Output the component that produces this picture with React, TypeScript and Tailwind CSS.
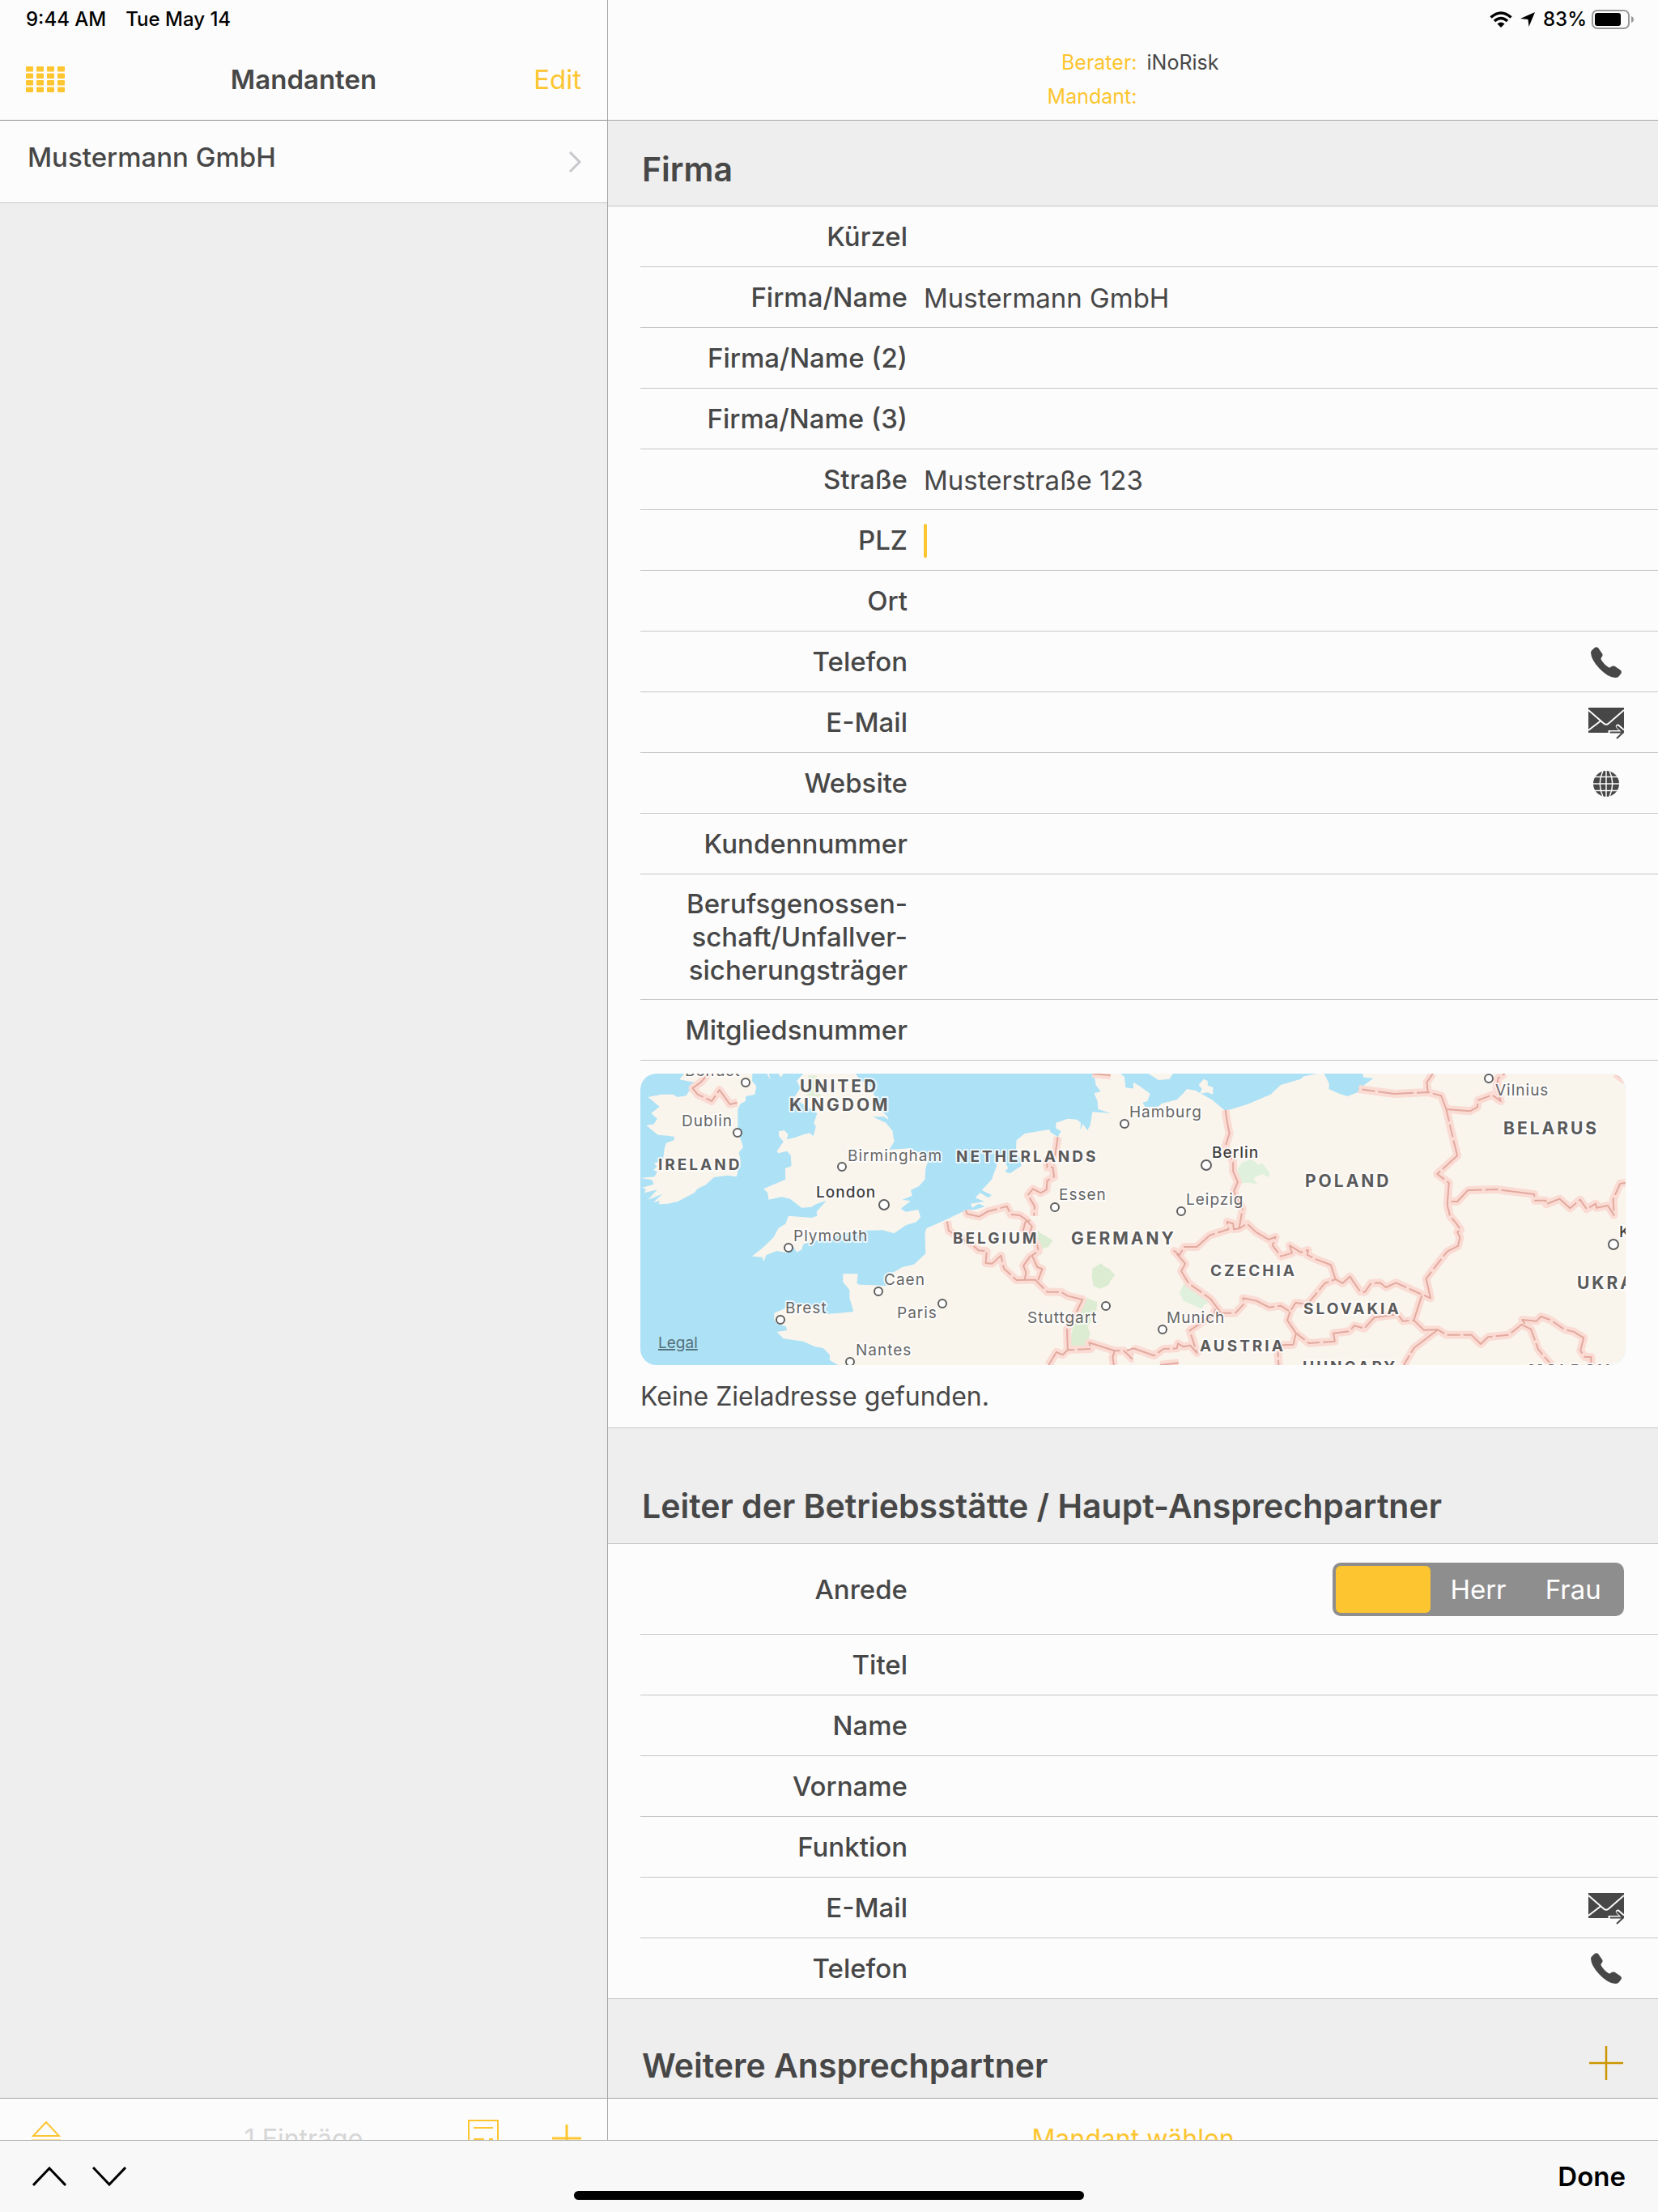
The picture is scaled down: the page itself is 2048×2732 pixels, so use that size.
// App.tsx

import { useState, type ReactNode } from 'react';

type FieldProps = {
  id: string;
  label: ReactNode;
  defaultValue?: string;
  icon?: ReactNode;
  active?: boolean;
  last?: boolean;
};

const cities = [
  { name: 'Belfast', x: 55, y: 3, cx: 130, cy: 11 },
  { name: 'Dublin', x: 51, y: 65, cx: 120, cy: 73 },
  { name: 'Birmingham', x: 256, y: 108, cx: 249, cy: 115 },
  { name: 'London', x: 217, y: 153, cx: 301, cy: 162, capital: true },
  { name: 'Plymouth', x: 189, y: 207, cx: 183, cy: 215 },
  { name: 'Caen', x: 301, y: 261, cx: 294, cy: 269 },
  { name: 'Brest', x: 179, y: 296, cx: 173, cy: 304 },
  { name: 'Paris', x: 317, y: 302, cx: 373, cy: 284 },
  { name: 'Nantes', x: 266, y: 348, cx: 259, cy: 356 },
  { name: 'Essen', x: 517, y: 156, cx: 512, cy: 165 },
  { name: 'Stuttgart', x: 478, y: 308, cx: 575, cy: 287 },
  { name: 'Hamburg', x: 604, y: 54, cx: 598, cy: 62 },
  { name: 'Berlin', x: 706, y: 104, cx: 699, cy: 113, capital: true },
  { name: 'Leipzig', x: 674, y: 162, cx: 668, cy: 170 },
  { name: 'Munich', x: 650, y: 308, cx: 645, cy: 316 },
  { name: 'Vilnius', x: 1056, y: 27, cx: 1048, cy: 6 },
  { name: 'Kyiv', x: 1209, y: 202, cx: 1202, cy: 211, capital: true },
];

const countries = [
  { name: 'UNITED', x: 197, y: 23, big: true },
  { name: 'KINGDOM', x: 184, y: 46, big: true },
  { name: 'IRELAND', x: 22, y: 119 },
  { name: 'NETHERLANDS', x: 390, y: 109 },
  { name: 'BELGIUM', x: 386, y: 210 },
  { name: 'GERMANY', x: 532, y: 211, big: true },
  { name: 'CZECHIA', x: 704, y: 250 },
  { name: 'POLAND', x: 821, y: 140, big: true },
  { name: 'AUSTRIA', x: 691, y: 343 },
  { name: 'SLOVAKIA', x: 819, y: 297 },
  { name: 'HUNGARY', x: 818, y: 369 },
  { name: 'BELARUS', x: 1066, y: 75, big: true },
  { name: 'UKRAINE', x: 1157, y: 266, big: true },
  { name: 'MOLDOVA', x: 1097, y: 373 },
];

// Borders of the western and the eastern half, each in its own grid
const bordersWest = [
  'M232 48L210 80L185 102L200 125L243 150L266 108L285 140L298 162L320 155',
  'M1290 283L1282 350L1256 370L1258 395L1275 395L1279 430L1258 445L1256 478L1238 490L1215 475L1200 498L1220 540L1218 575',
  'M1012 555L1016 568L1052 578L1080 558L1136 540L1148 570L1175 573L1195 590L1212 615L1205 640L1228 685L1232 705L1212 722L1228 765L1243 772L1230 815',
  'M1206 592L1192 597L1184 635',
  'M955 595L960 630L985 650L1030 680L1050 703L1075 706L1072 750L1092 752L1118 722L1127 770L1165 813L1222 812L1258 857L1300 857L1320 872L1365 885L1345 935L1318 995L1320 1070',
  'M1208 722L1186 760L1194 785L1190 810',
  'M1262 1128L1286 1080L1305 1090L1320 1072L1390 1068L1385 1045L1462 1075L1490 1075L1515 1105L1525 1066L1570 1090',
  'M1462 1075L1456 1100L1460 1128',
  'M1395 48L1450 55',
];

const bordersEast = [
  'M275 183L280 225L287 270L274 320L298 375L298 410L312 450L300 485L326 550L316 622L300 625L298 604L280 597L284 625L228 647L190 690L152 690L138 720L122 705L155 752L143 780L165 825L230 882L262 935L305 935L328 905L328 880L368 890L405 914L440 908L468 930L485 897L520 903L572 825L604 810L590 757L548 737L520 720L522 702L500 710L467 685L474 713L441 725L416 685L425 653L404 663L366 635L340 604L316 622',
  'M604 810L625 825L647 800L678 856L692 857L710 825L737 823L755 840L785 823L860 865L888 880L875 808L895 775L938 707L970 687L976 655L968 635L978 627L966 605L946 575L938 535L943 453L908 420L968 352L950 260L935 180L920 130L880 117L780 123L673 105',
  'M880 117L877 80L895 48',
  'M935 180L1006 187L1028 172L1030 147L1072 127L1098 150L1085 100L1090 65L1110 48',
  'M950 522L968 522L1000 480L1085 477L1198 495L1200 518L1232 518L1234 532L1274 512L1305 547L1335 515L1355 550L1382 530L1384 545L1418 537L1436 572L1434 513L1455 455L1471 453',
  'M468 930L460 962L486 1010L525 1047L602 1040L598 1010L645 1003L660 982L690 992L720 952L790 940L805 965L838 962L862 870',
  'M838 962L868 998L910 997L935 1016L1010 1016L1038 1050L1060 1024L1122 1016L1160 978L1188 995L1210 1070L1250 1128',
  'M910 997L838 1065L808 1128',
  'M1170 975L1162 960L1205 965L1218 948L1245 960L1290 997L1315 1004L1346 1027L1336 1075L1350 1098L1368 1098L1368 1128',
  'M486 1010L478 1052L445 1054L432 1085L434 1128',
  'M245 920L240 940L168 1000L190 1083L170 1055L150 1060L133 1048L130 1066L90 1068L62 1093L0 1066',
  'M80 1128L135 1120',
  'M1440 48L1471 75',
];

function Borders({ paths }: { paths: string[] }) {
  return (
    <g fill="none" strokeLinejoin="round">
      {paths.map((d) => (
        <path key={d} d={d} stroke="#fadcd4" strokeWidth="10" vectorEffect="non-scaling-stroke" />
      ))}
      {paths.map((d) => (
        <path key={d} d={d} stroke="#e3a99e" strokeWidth="2" strokeDasharray="44 4 16 4" vectorEffect="non-scaling-stroke" />
      ))}
    </g>
  );
}

function EuropeMap() {
  return (
    <svg
      viewBox="0 0 1217 360"
      preserveAspectRatio="xMidYMid slice"
      className="block h-[360px] w-full rounded-[20px] bg-[#ade1f6]"
      role="img"
      aria-label="Karte"
    >
      <g transform="translate(-11 -16) scale(.4082 .3333)">
        <g fill="#f9f5ed">
          <path d="M160 48L145 70L190 80L182 100L165 130L140 135L125 125L90 125L50 135L85 170L60 195L78 215L68 235L45 240L80 275L110 278L130 282L128 295L105 305L100 325L95 370L68 380L78 392L66 405L78 412L70 430L28 435L62 442L68 458L32 470L44 476L38 490L78 478L50 515L94 494L66 525L86 520L82 532L110 530L140 522L190 490L200 475L225 460L250 432L290 425L318 430L330 370L325 340L338 320L330 290L322 260L322 180L330 160L345 150L346 132L373 125L378 95L365 75L366 48Z" />
          <path d="M520 48L500 75L512 100L490 140L545 180L562 196L552 230L558 245L550 280L540 268L520 274L495 285L470 292L474 272L462 258L446 262L446 280L460 300L440 335L445 343L470 335L482 350L484 390L465 400L466 440L400 475L412 490L415 515L455 505L480 512L515 545L545 542L558 532L590 518L560 560L562 575L545 582L475 575L466 605L445 620L430 655L400 690L365 725L396 728L400 745L408 720L440 705L470 712L480 700L490 690L500 710L515 700L520 680L550 668L600 660L640 640L700 630L760 628L795 640L830 610L862 598L875 580L868 552L830 560L815 548L845 520L820 515L850 500L845 480L870 465L888 440L890 400L898 370L880 345L840 325L780 330L795 300L790 260L770 230L730 208L765 208L778 220L775 208L745 170L740 140L720 90L690 70L678 48Z" />
          <path d="M625 1128L600 1110L600 1090L580 1065L555 1060L520 1040L460 1030L440 1005L470 1000L468 985L440 975L432 960L432 935L470 915L500 905L530 900L580 940L630 935L672 930L660 880L660 850L640 820L640 790L685 790L682 825L690 830L730 832L780 835L770 800L820 765L855 755L890 715L888 640L892 622L950 590L1010 555L1040 552L1070 540L1050 530L1032 545L1026 530L1068 522L1040 508L1055 490L1080 508L1090 498L1060 480L1090 440L1105 390L1106 360L1130 350L1130 375L1140 398L1130 410L1145 418L1180 390L1175 360L1163 345L1165 295L1190 270L1265 255L1268 265L1290 283L1300 262L1284 250L1285 230L1320 215L1348 218L1360 230L1358 258L1366 235L1380 258L1388 240L1395 190L1420 192L1450 195L1412 180L1410 150L1400 120L1420 115L1405 90L1400 48L1480 48L1492 60L1495 100L1530 105L1550 120L1548 145L1568 115L1568 1200L620 1200Z" />
          <path d="M410 48L420 72L416 48ZM445 48L452 62L460 48Z" />
        </g>
        <g fill="#dbecd2">
          <path d="M535 55L560 55L572 135L530 130Z" opacity=".8" />
          <path d="M1230 630L1242 642L1275 665L1262 690L1245 697L1240 720L1205 720L1225 695L1228 660Z" />
          <path d="M1422 750L1430 762L1445 770L1463 795L1450 815L1445 830L1420 845L1398 835L1393 800L1395 770Z" />
          <path d="M1380 880L1410 895L1405 940L1385 945L1392 965L1380 985L1388 1010L1380 1040L1390 1050L1340 1065L1325 1055L1340 960L1355 925L1365 900Z" />
        </g>
        <Borders paths={bordersWest} />
      </g>
      <g transform="translate(609 -16) scale(.4133 .3333)">
        <path d="M0 48H1500V1200H0Z" fill="#f9f5ed" />
        <path d="M0 48L0 80L20 95L50 122L42 150L28 155L35 172L75 170L85 158L130 145L148 122L160 105L185 110L235 145L275 187L340 162L410 125L440 90L500 68L510 58L550 48L570 48L585 85L584 105L615 122L640 132L675 115L690 90L717 65L688 62L685 48Z" fill="#ade1f6" />
        <path d="M45 48L75 72L108 68L118 48ZM210 68L222 75L222 92L238 98L238 125L222 118L198 122L205 105L195 90Z" fill="#f9f5ed" />
        <g fill="#dff0dc">
          <path d="M350 365L362 372L372 385L385 380L407 415L405 432L385 420L365 430L360 440L372 458L345 452L315 455L312 400L325 378Z" />
          <path d="M152 825L195 845L235 890L210 905L205 920L150 890L138 860Z" />
        </g>
        <Borders paths={bordersEast} />
        {/* the first western border piece that runs past the seam */}
        <path d="M0 1066L-20 1075" stroke="#e3a99e" strokeWidth="2" vectorEffect="non-scaling-stroke" />
      </g>
      <g stroke="#ffffff" strokeOpacity=".75" strokeWidth="4" paintOrder="stroke" strokeLinejoin="round">
        {countries.map((c) => (
          <text
            key={c.name}
            x={c.x}
            y={c.y}
            fill="#5a5a5a"
            className={c.big ? 'text-[21px] font-bold tracking-[3px]' : 'text-[19px] font-bold tracking-[3px]'}
          >
            {c.name}
          </text>
        ))}
        {cities.map((c) => (
          <text
            key={c.name}
            x={c.x}
            y={c.y}
            fill={c.capital ? '#3f3f3f' : '#666666'}
            className={c.capital ? 'text-[19px] font-medium tracking-[1px]' : 'text-[19px] tracking-[1px]'}
          >
            {c.name}
          </text>
        ))}
      </g>
      <g fill="#ffffff" stroke="#5f5f5f" strokeWidth="2">
        {cities.map((c) => (
          <circle key={c.name} cx={c.cx} cy={c.cy} r={c.capital ? 6 : 5} />
        ))}
      </g>
      <a href="#legal">
        <text x="22" y="339" fill="#557079" className="text-[19px] underline">Legal</text>
      </a>
    </svg>
  );
}

function PhoneIcon() {
  return (
    <svg viewBox="0 0 38 38" className="h-[38px] w-[38px]" fill="#474747">
      <path d="M0 7Q0 5 2 3.500L5 .8Q7 -.6 9 1L14.200 8.500Q15.200 10.500 13.500 12.500Q12 14 12.700 15.500Q16 21.500 22 25.200Q23.500 26 25 24.600Q27 22.700 29.500 23.800L36.500 28.500Q38.800 30.500 37.300 33L34.500 36.500Q33 38 30 38Q21 37.600 10.500 26.500Q.5 16 0 7Z" />
    </svg>
  );
}

function MailIcon() {
  return (
    <svg viewBox="0 0 44 40" className="h-10 w-11" fill="none">
      <path d="M0 1H44V32H0Z" fill="#474747" />
      <path d="M0 4L19 20.500Q22 23 25 20.500L44 4M0 29L15 17.500M25.500 33V30H40L35 25Q34 22.500 37 22.500L44 28.500" stroke="#fcfcfc" strokeWidth="2" />
      <path d="M27 31.500H43M35 24L43 31.500L35 39" stroke="#474747" strokeWidth="2" />
    </svg>
  );
}

function GlobeIcon() {
  return (
    <svg viewBox="0 0 32 32" className="h-8 w-8" fill="none">
      <circle cx="16" cy="16" r="16" fill="#474747" />
      <path d="M0 16H32M16 0V32M2 7.500H30M2 24.500H30M12 0Q4.500 16 12 32M20 0Q27.500 16 20 32" stroke="#fcfcfc" strokeWidth="1.500" />
    </svg>
  );
}

function Field({ id, label, defaultValue, icon, active, last }: FieldProps) {
  return (
    <div
      className={
        last
          ? 'ml-10 flex min-h-[74px] items-center pr-[42px]'
          : 'ml-10 flex min-h-[75px] items-center border-b border-[#c6c6c8] pt-4 pr-[42px] pb-[15px]'
      }
    >
      <label htmlFor={id} className="mr-5 w-[330px] shrink-0 text-right leading-[41px] font-medium">
        {label}
      </label>
      {active && <span className="h-[42px] w-1 rounded-sm bg-[#fdc52f]" />}
      <input id={id} type="text" defaultValue={defaultValue} className="h-10 min-w-0 flex-1 bg-transparent outline-none" />
      {icon && (
        <button type="button" className="flex w-11 shrink-0 justify-center" aria-label="Öffnen">
          {icon}
        </button>
      )}
    </div>
  );
}

function Sidebar() {
  return (
    <aside className="flex w-[751px] shrink-0 flex-col border-r border-[#a6a6a6]">
      <header className="border-b border-[#8f8f8f] bg-[#fcfcfc]">
        <div className="flex h-12 items-center gap-6 pl-8 text-[24px] font-medium text-black">
          <span>9:44 AM</span>
          <span>Tue May 14</span>
        </div>
        <div className="grid h-[100px] grid-cols-3 items-center px-8">
          <button type="button" aria-label="Menü">
            <svg viewBox="0 0 48 32" className="h-8 w-12" fill="#fdc52f">
              {[0, 13, 26, 39].map((x) =>
                [0, 8.500, 17, 25.500].map((y) => <rect key={`${x}-${y}`} x={x} y={y} width="9" height="6.500" rx="1" />)
              )}
            </svg>
          </button>
          <h1 className="text-center font-semibold">Mandanten</h1>
          <button type="button" className="text-right text-[#fdc52f]">Edit</button>
        </div>
      </header>
      <a href="#mustermann" className="flex h-[102px] items-center justify-between border-b border-[#c6c6c8] bg-[#fcfcfc] pr-8 pl-[34px]">
        <span className="pb-3 font-medium">Mustermann GmbH</span>
        <svg viewBox="0 0 16 26" className="h-[26px] w-4" fill="none" stroke="#c7c7cc" strokeWidth="3">
          <path d="M2 1L14 13L2 25" />
        </svg>
      </a>
      <div className="flex-1 bg-[#eeeeee]" />
      <footer className="h-[141px] border-t border-[#a6a6a6] bg-[#fcfcfc]">
        <div className="grid h-[100px] grid-cols-3 items-center px-8">
          <button type="button" className="pl-[7px]" aria-label="Sortieren">
            <svg viewBox="0 0 36 44" className="h-11 w-9" fill="none" stroke="#fdc52f" strokeWidth="2">
              <path d="M2 18L18 1L34 18ZM0 23.500H36" />
            </svg>
          </button>
          <p className="text-center text-[32px] text-[#d6d6d6]">1 Einträge</p>
          <div className="flex items-center justify-end gap-[66px]">
            <button type="button" aria-label="Bericht">
              <svg viewBox="0 0 38 48" className="h-12 w-[38px]" fill="none" stroke="#fdc52f" strokeWidth="2">
                <path d="M1 1H37V47H1ZM7 10H31M7 24H20M26 24H31" />
              </svg>
            </button>
            <button type="button" aria-label="Hinzufügen">
              <svg viewBox="0 0 36 36" className="h-9 w-9" fill="none" stroke="#fdc52f" strokeWidth="3">
                <path d="M0 17H36M18 0V36" />
              </svg>
            </button>
          </div>
        </div>
      </footer>
    </aside>
  );
}

function SalutationPicker() {
  const [selected, setSelected] = useState('');

  return (
    <fieldset className="ml-auto grid h-[66px] w-[360px] grid-cols-3 rounded-[10px] bg-[#8e8e8e] p-1 text-white">
      <legend className="sr-only">Anrede</legend>
      {['', 'Herr', 'Frau'].map((option) => (
        <label
          key={option}
          className={
            selected === option
              ? 'flex items-center justify-center rounded-md bg-[#fdc52f]'
              : 'flex items-center justify-center rounded-md'
          }
        >
          <input
            type="radio"
            name="anrede"
            value={option}
            aria-label={option || 'Keine Angabe'}
            checked={selected === option}
            onChange={() => setSelected(option)}
            className="sr-only"
          />
          {option}
        </label>
      ))}
    </fieldset>
  );
}

function StatusIcons() {
  return (
    <div className="flex h-12 items-center justify-end pr-[30px] text-[24px] font-medium text-black">
      <svg viewBox="0 0 28 20" className="h-5 w-7" fill="none" stroke="#000000" strokeWidth="3.600">
        <path d="M1.500 7.500Q14 -3.500 26.500 7.500M6 12Q14 5 22 12" />
        <path d="M9.500 15.500Q14 11.500 18.500 15.500L14 20Z" fill="#000000" stroke="none" />
      </svg>
      <svg viewBox="0 0 18 18" className="ml-[10px] h-[18px] w-[18px]">
        <path d="M18 0L10.500 18L9.500 9L0 8Z" />
      </svg>
      <span className="ml-[10px]">83%</span>
      <svg viewBox="0 0 52 24" className="ml-[6px] h-6 w-[52px]">
        <rect x="1" y="1" width="45" height="22" rx="6" fill="none" stroke="#999999" strokeWidth="2" />
        <rect x="4" y="4" width="32" height="16" rx="3" />
        <path d="M49 8Q52 9 52 12Q52 15 49 16Z" fill="#999999" />
      </svg>
    </div>
  );
}

export default function App() {
  return (
    <div className="flex min-h-screen w-full bg-[#eeeeee] font-['Inter',sans-serif] text-[33px] leading-[42px] text-[#474747]">
      <Sidebar />

      <main className="flex min-w-0 flex-1 flex-col">
        <header className="h-[149px] border-b border-[#a6a6a6] bg-[#fcfcfc]">
          <StatusIcons />
          <dl className="grid grid-cols-2 gap-x-3 pt-2 pl-[22px] text-[25px]">
            <dt className="text-right text-[#fdc52f]">Berater:</dt>
            <dd>iNoRisk</dd>
            <dt className="text-right text-[#fdc52f]">Mandant:</dt>
            <dd />
          </dl>
        </header>

        <h2 className="border-b border-[#c6c6c8] px-[42px] pt-9 pb-[21px] text-[41px] leading-[48px] font-semibold">Firma</h2>
        <section className="bg-[#fcfcfc]">
          <Field id="kuerzel" label="Kürzel" />
          <Field id="firma" label="Firma/Name" defaultValue="Mustermann GmbH" />
          <Field id="firma2" label="Firma/Name (2)" />
          <Field id="firma3" label="Firma/Name (3)" />
          <Field id="strasse" label="Straße" defaultValue="Musterstraße 123" />
          <Field id="plz" label="PLZ" active />
          <Field id="ort" label="Ort" />
          <Field id="telefon" label="Telefon" icon={<PhoneIcon />} />
          <Field id="email" label="E-Mail" icon={<MailIcon />} />
          <Field id="website" label="Website" icon={<GlobeIcon />} />
          <Field id="kundennummer" label="Kundennummer" />
          <Field
            id="bg"
            label={
              <>
                Berufsgenossen-
                <br />
                schaft/Unfallver-
                <br />
                sicherungsträger
              </>
            }
          />
          <Field id="mitgliedsnummer" label="Mitgliedsnummer" />
          <div className="px-10 pt-4">
            <EuropeMap />
            <p className="flex h-[77px] items-center text-[32px]">Keine Zieladresse gefunden.</p>
          </div>
        </section>

        <h2 className="border-y border-[#c6c6c8] px-[42px] pt-[72px] pb-[22px] text-[41px] leading-[48px] font-semibold">
          Leiter der Betriebsstätte / Haupt-Ansprechpartner
        </h2>
        <section className="bg-[#fcfcfc]">
          <div className="ml-10 flex h-28 items-center border-b border-[#c6c6c8] pr-[42px]">
            <span className="w-[330px] text-right font-medium">Anrede</span>
            <SalutationPicker />
          </div>
          <Field id="titel" label="Titel" />
          <Field id="name" label="Name" />
          <Field id="vorname" label="Vorname" />
          <Field id="funktion" label="Funktion" />
          <Field id="email2" label="E-Mail" icon={<MailIcon />} />
          <Field id="telefon2" label="Telefon" icon={<PhoneIcon />} last />
        </section>

        <div className="flex flex-1 items-start justify-between border-t border-[#c6c6c8] pt-[58px] pr-[42px] pb-[14px] pl-[42px]">
          <h2 className="text-[41px] leading-[48px] font-semibold">Weitere Ansprechpartner</h2>
          <button type="button" aria-label="Ansprechpartner hinzufügen">
            <svg viewBox="0 0 44 42" className="h-[42px] w-11" fill="none" stroke="#cc9500" strokeWidth="2.500">
              <path d="M1 21H43M22 0V42" />
            </svg>
          </button>
        </div>

        <footer className="h-[141px] border-t border-[#a6a6a6] bg-[#fcfcfc]">
          <button type="button" className="h-[100px] w-full text-center text-[32px] text-[#fdc52f]">Mandant wählen</button>
        </footer>
      </main>

      {/* Keyboard accessory bar, lies over the toolbars */}
      <div className="fixed inset-x-0 bottom-0 flex h-[89px] items-center justify-between border-t border-[#b0b0b0] bg-[#f8f8f8] px-10 text-black">
        <div className="flex gap-8">
          <button type="button" aria-label="Vorheriges Feld">
            <svg viewBox="0 0 42 24" className="h-6 w-[42px]" fill="none" stroke="#000000" strokeWidth="3">
              <path d="M1 23L21 2L41 23" />
            </svg>
          </button>
          <button type="button" aria-label="Nächstes Feld">
            <svg viewBox="0 0 42 24" className="h-6 w-[42px]" fill="none" stroke="#000000" strokeWidth="3">
              <path d="M1 1L21 22L41 1" />
            </svg>
          </button>
        </div>
        <button type="button" className="font-semibold">Done</button>
        <div className="absolute bottom-[15px] left-1/2 h-[11px] w-[630px] -translate-x-1/2 rounded-full bg-black" />
      </div>
    </div>
  );
}
